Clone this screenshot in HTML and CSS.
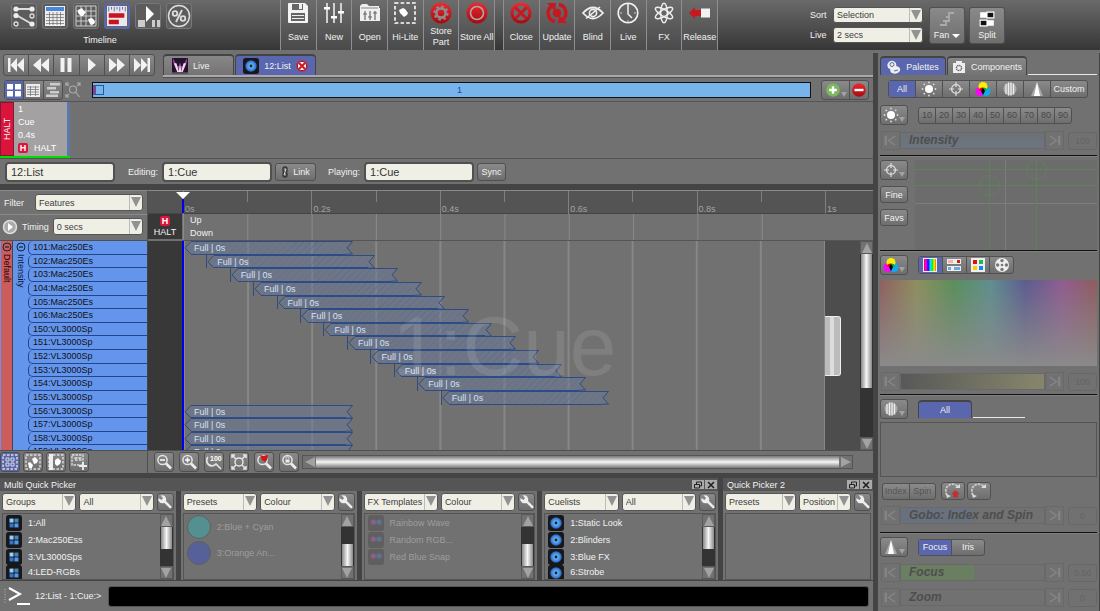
FILE: index.html
```html
<!DOCTYPE html>
<html lang="en">
    <head>
        <title>12:List - Timeline</title>
        <meta charset="UTF-8">
        <link rel="stylesheet" href="styles.css">
        <script src="timeline.js" defer></script>
    </head>
    <body>
        <!-- icons -->
        <svg class="defs" aria-hidden="true">
            <defs>
                <linearGradient id="redg" x1="0" y1="0" x2="0" y2="1"><stop offset="0" stop-color="#ee2a30"/><stop offset="1" stop-color="#a50a10"/></linearGradient>
                <linearGradient id="rainbow"><stop offset="0" stop-color="#f00"/><stop offset=".15" stop-color="#f0f"/><stop offset=".35" stop-color="#20f"/><stop offset=".55" stop-color="#0ef"/><stop offset=".7" stop-color="#0e2"/><stop offset=".85" stop-color="#fe0"/><stop offset="1" stop-color="#f60"/></linearGradient>
                <radialGradient id="disc"><stop offset="0" stop-color="#8cf"/><stop offset=".6" stop-color="#4a94e6"/><stop offset="1" stop-color="#2660b8"/></radialGradient>
            </defs>
            <symbol id="patch" viewBox="0 0 24 24"><g stroke="#ddd" stroke-width="2" fill="none"><path d="M4 5h16M4 11l16 9"/><circle cx="20" cy="12" r="2" stroke-width="1.3"/><circle cx="4" cy="20" r="2" stroke-width="1.3"/></g><g fill="#eee"><circle cx="4" cy="5" r="2.6"/><circle cx="20" cy="5" r="2.6"/><circle cx="4" cy="11.500" r="2.600"/><circle cx="20" cy="20" r="2.6"/></g></symbol>
            <symbol id="sheet" viewBox="0 0 24 24"><path d="M2 2h20v20H2z" fill="#eee"/><path d="M3 3h18v4H3z" fill="#4a86dc"/><path d="M3 10.500h18M3 13.500h18M3 16.500h18M3 19.500h18M6.500 8v13M10 8v13M14 8v13M17.500 8v13" stroke="#777" stroke-width=".8"/></symbol>
            <symbol id="plan" viewBox="0 0 24 24"><path d="M2 2h20v20H2zM7 2v20M12 2v20M17 2v20M2 7h20M2 12h20M2 17h20" stroke="#ccc" fill="none"/><path d="M4 6l4-2 2 3 2 1-3 4-2 0-3-3zM14 15l4-1 2 2 1 3-3 2-2-1z" fill="#fff"/></symbol>
            <symbol id="tline" viewBox="0 0 24 24"><path d="M1 1h22v22H1z" fill="#e8e8ee"/><path d="M3 2v5M6 2v3M9 2v5M12 2v3M15 2v5M18 2v3M21 2v5" stroke="#5a66a8"/><path d="M3 9h17v5H3zM3 16h11v5H3z" fill="#c8141c"/></symbol>
            <symbol id="playpause" viewBox="0 0 24 24"><path d="M10 2l8 8-8 8z" fill="#fff"/><path d="M2 16h7v7H2zM16 16h3v7h-3zM21 16h3v7h-3z" fill="#ccc"/></symbol>
            <symbol id="percent" viewBox="0 0 24 24"><g fill="none" stroke="#ddd"><circle cx="12" cy="12" r="10.500" stroke-width="1.500"/><circle cx="8" cy="9.500" r="2.300" stroke-width="1.800"/><circle cx="16" cy="14.500" r="2.300" stroke-width="1.800"/><path d="M15 6L9 18" stroke-width="1.800"/></g></symbol>
            <symbol id="save" viewBox="0 0 22 22"><path d="M1 2q0-1 1-1h16l3 3v16q0 1-1 1H2q-1 0-1-1z" fill="#f4f4f4"/><path d="M5 2h11v6H5zM4 11h14v8H4z" fill="#666"/><path d="M12 2h3v5h-3zM5 13h12v1H5zM5 16h12v1H5z" fill="#eee"/></symbol>
            <symbol id="faders" viewBox="0 0 22 22"><path d="M4 1v20M11 1v20M18 1v20" stroke="#ddd" stroke-width="1.800"/><path d="M1 5h6v2.500H1zM8 14h6v2.500H8zM15 9h6v2.500h-6z" fill="#fff"/></symbol>
            <symbol id="open" viewBox="0 0 22 22"><path d="M1 19V4l2-2h5l2 2h10v2h1v13z" fill="#eee"/><path d="M2 6h17" stroke="#888"/><path d="M6 9v9M11 9v9M16 9v9M4 12h4M9 15h4M14 11h4" stroke="#666" stroke-width="1.200"/></symbol>
            <symbol id="hilite" viewBox="0 0 22 22"><path d="M1 1h20v20H1z" fill="none" stroke="#fff" stroke-width="1.600" stroke-dasharray="3.500 2.160"/><path d="M5 8l4-2 2 1 3 4-1 2-3 2-4-4z" fill="#fff"/></symbol>
            <symbol id="part" viewBox="0 0 22 22"><circle cx="11" cy="11" r="10.500" fill="url(#redg)"/><circle cx="11" cy="11" r="4.600" fill="none" stroke="#8d8d8d" stroke-width="2.600"/><circle cx="11" cy="11" r="6.600" fill="none" stroke="#8d8d8d" stroke-width="2" stroke-dasharray="2.600 2.580"/></symbol>
            <symbol id="storeall" viewBox="0 0 22 22"><circle cx="11" cy="11" r="10.500" fill="url(#redg)"/><circle cx="11" cy="11" r="6.500" fill="none" stroke="#aaa" stroke-width="1.600"/></symbol>
            <symbol id="close" viewBox="0 0 22 22"><circle cx="11" cy="11" r="10.500" fill="url(#redg)"/><circle cx="11" cy="11" r="7.500" fill="#6a6a6a"/><path d="M5.500 5.500l11 11M16.500 5.500l-11 11" stroke="#c8181f" stroke-width="3"/></symbol>
            <symbol id="update" viewBox="0 0 22 22"><circle cx="11" cy="11" r="4.300" fill="#c8181f"/><path d="M7 3.500a8.500 8.500 0 0 0 2 16M15 18.500a8.500 8.500 0 0 0-2-16" fill="none" stroke="#c8181f" stroke-width="3.400"/><path d="M1 1h9l-1 8zM21 21h-9l1-8z" fill="#c8181f"/></symbol>
            <symbol id="blind" viewBox="0 0 22 22"><path d="M1 11q10-11 20 0q-10 11-20 0z" fill="none" stroke="#eee" stroke-width="1.800"/><circle cx="11" cy="11" r="3.600" fill="none" stroke="#eee" stroke-width="1.600"/><path d="M4 16.500L18 5" stroke="#eee" stroke-width="1.600"/></symbol>
            <symbol id="clock" viewBox="0 0 22 22"><circle cx="11" cy="11" r="9.800" fill="none" stroke="#f2f2f2" stroke-width="1.600"/><path d="M11 2v10l4 4" fill="none" stroke="#f2f2f2" stroke-width="1.500"/><path d="M3 11h2M17 11h2M11 18v2" stroke="#ccc"/></symbol>
            <symbol id="fx" viewBox="0 0 22 22"><g fill="none" stroke="#eee" stroke-width="1.400"><ellipse cx="11" cy="11" rx="3.300" ry="9.800"/><ellipse cx="11" cy="11" rx="3.300" ry="9.800" transform="rotate(60 11 11)"/><ellipse cx="11" cy="11" rx="3.300" ry="9.800" transform="rotate(120 11 11)"/></g></symbol>
            <symbol id="release" viewBox="0 0 22 22"><path d="M0 11l6-6v3h6v6H6v3z" fill="#c8181f"/><path d="M12 6.500h9v9h-9z" fill="#f2f2f2"/></symbol>
            <symbol id="fan" viewBox="0 0 16 16"><path d="M1 14h6v-4M4 10h6V6M7 6h3V2h5" fill="none" stroke="#aaa" stroke-width="1.800"/></symbol>
            <symbol id="split" viewBox="0 0 14 14"><path d="M1 1h6v5H1zM7 8h6v5H7z" fill="#fff"/><path d="M7 1h6v5H7zM1 8h6v5H1z" fill="#111"/><path d="M7 1h6v5H7zM1 8h6v5H1z" fill="none" stroke="#fff"/></symbol>
            <symbol id="first" viewBox="0 0 16 14"><path d="M0 0h2.500v14H0zM9 0v14L2.500 7zM16 0v14L9 7z" fill="#f2f2f2"/></symbol>
            <symbol id="rew" viewBox="0 0 16 14"><path d="M8 0v14L0 7zM16 0v14L8 7z" fill="#f2f2f2"/></symbol>
            <symbol id="pause" viewBox="0 0 16 14"><path d="M2.500 0h4v14h-4zM9.500 0h4v14h-4z" fill="#f2f2f2"/></symbol>
            <symbol id="play" viewBox="0 0 16 14"><path d="M4 0l8 7-8 7z" fill="#f2f2f2"/></symbol>
            <symbol id="ff" viewBox="0 0 16 14"><path d="M0 0l8 7-8 7zM8 0l8 7-8 7z" fill="#f2f2f2"/></symbol>
            <symbol id="last" viewBox="0 0 16 14"><path d="M16 0h-2.500v14H16zM7 0v14l6.500-7zM0 0v14l7-7z" fill="#f2f2f2"/></symbol>
            <symbol id="stage" viewBox="0 0 18 18"><path d="M0 0h18v18H0z" fill="#24122f"/><path d="M1 0l5 9h6l5-9v4l-4 9H5L1 4z" fill="#92418a"/><path d="M2 6l4 10h2L5 6zM9 5l-1.500 11h3zM16 6l-4 10h-2l3-10z" fill="#f4d4f0"/><path d="M0 16h18v2H0z" fill="#555"/></symbol>
            <symbol id="cuelist" viewBox="0 0 18 18"><rect width="18" height="18" rx="3" fill="#16181c"/><circle cx="9" cy="9" r="6.500" fill="url(#disc)"/><circle cx="9" cy="9" r="1.600" fill="#123"/></symbol>
            <symbol id="group" viewBox="0 0 18 18"><rect width="18" height="18" rx="3" fill="#16181c"/><path d="M4 4h4.500v4.500H4z" fill="#9cf"/><path d="M9.500 4H14v4.500H9.500z" fill="#48b"/><path d="M4 9.500h4.500V14H4z" fill="#37c"/><path d="M9.500 9.500H14V14H9.500z" fill="#59e"/></symbol>
            <symbol id="effect" viewBox="0 0 18 18"><rect width="18" height="18" rx="3" fill="#5f5f5f"/><circle cx="6" cy="8" r="3" fill="#8d5f88"/><circle cx="12.500" cy="8" r="3" fill="#5e7394"/></symbol>
            <symbol id="tabx" viewBox="0 0 12 12"><circle cx="6" cy="6" r="4.800" fill="#fff" stroke="#c8181f" stroke-width="1.600"/><path d="M3 3l6 6M9 3l-6 6" stroke="#c8181f" stroke-width="2"/></symbol>
            <symbol id="tiles" viewBox="0 0 16 16"><path d="M1 2h6v5.500H1zM9 2h6v5.500H9zM1 9h6v5.500H1zM9 9h6v5.500H9z" fill="#fff"/></symbol>
            <symbol id="list" viewBox="0 0 16 16"><path d="M1 2h14v13H1z" fill="#eee"/><path d="M2 5h12M2 7.500h12M2 10h12M2 12.500h12M5.500 4v10M10.500 4v10" stroke="#777" stroke-width=".8"/></symbol>
            <symbol id="stack" viewBox="0 0 16 16"><path d="M5 1h10v2.500H5zM2 5h9v2.500H2zM5 9h9v2.500H5zM1 12.500h12V15H1z" fill="#ccc"/></symbol>
            <symbol id="find" viewBox="0 0 16 16"><g fill="none" stroke="#aaa" stroke-width="1.200"><path d="M1 4V1h3M12 1h3v3M1 12v3h3M1 1l3 3M15 1l-3 3M1 15l3-3"/><circle cx="8" cy="7.500" r="3.500"/><path d="M10.500 10l4 5"/></g></symbol>
            <symbol id="plus" viewBox="0 0 14 14"><circle cx="7" cy="7" r="6.800" fill="#7cb75e"/><path d="M7 3.200v7.600M3.200 7h7.600" stroke="#fff" stroke-width="2.400"/></symbol>
            <symbol id="minus" viewBox="0 0 14 14"><circle cx="7" cy="7" r="6.800" fill="url(#redg)"/><path d="M2.500 7h9" stroke="#fff" stroke-width="2.400"/></symbol>
            <symbol id="chain" viewBox="0 0 8 12"><g fill="none" stroke="#333" stroke-width="1.400"><rect x="2" y="1" width="4" height="5" rx="2"/><rect x="2" y="6" width="4" height="5" rx="2"/></g><path d="M5 3l-2 6" stroke="#ddd"/></symbol>
            <symbol id="sun" viewBox="0 0 16 16"><circle cx="8" cy="8" r="4" fill="#fff"/><g fill="#ddd"><circle cx="8" cy="1.500" r=".9"/><circle cx="8" cy="14.500" r=".9"/><circle cx="1.500" cy="8" r=".9"/><circle cx="14.500" cy="8" r=".9"/><circle cx="3.300" cy="3.300" r=".9"/><circle cx="12.700" cy="3.300" r=".9"/><circle cx="3.300" cy="12.700" r=".9"/><circle cx="12.700" cy="12.700" r=".9"/></g></symbol>
            <symbol id="target" viewBox="0 0 16 16"><circle cx="8" cy="8" r="4.400" fill="none" stroke="#ddd" stroke-width="1.400"/><path d="M8 1v5M8 10v5M1 8h5M10 8h5" stroke="#ddd" stroke-width="1.200"/></symbol>
            <symbol id="cmy" viewBox="0 0 16 16"><circle cx="5" cy="10.500" r="4.500" fill="#f0f"/><circle cx="11" cy="10.500" r="4.500" fill="#1ae"/><circle cx="8" cy="5.500" r="4.500" fill="#fe0"/><path d="M4 8q2-2 4-1.500V9L6 10q-2-.5-2-2z" fill="#e00"/><path d="M12 8q-2-2-4-1.500V9l2 1q2-.5 2-2z" fill="#0a4"/><path d="M8 7l2 3-2 4-2-4z" fill="#000"/></symbol>
            <symbol id="gobo" viewBox="0 0 16 16"><circle cx="8" cy="8" r="6.500" fill="#aaa"/><path d="M4 3v10M6.500 1.500v13M9 1.500v13M11.500 2.500v11" stroke="#eee" stroke-width="1.200"/></symbol>
            <symbol id="beam" viewBox="0 0 16 16"><path d="M8 1l6 14H2z" fill="#aaa"/><path d="M8 1l3 14H5z" fill="#fff"/></symbol>
            <symbol id="palette" viewBox="0 0 14 14"><path d="M1 3q3-4 7-1 2 2 1 4 5 1 4 5-3 4-8 2-2-1-2-4-4-2-2-6z" fill="#eee"/><circle cx="5" cy="4.500" r="2" fill="none" stroke="#5a66a8"/><path d="M7 11l4-1" stroke="#5a66a8"/></symbol>
            <symbol id="component" viewBox="0 0 14 14"><path d="M4 3V1h6v2h3v10H1V3z" fill="#eee"/><circle cx="7" cy="8" r="2.600" fill="none" stroke="#666" stroke-width="1.400" stroke-dasharray="1.400 .6"/></symbol>
            <symbol id="spectrum" viewBox="0 0 16 16"><path d="M1 1h14v14H1z" fill="#eee"/><path d="M2 2h12v12H2z" fill="url(#rainbow)"/></symbol>
            <symbol id="mix" viewBox="0 0 16 16"><path d="M1 2h14v5H1zM1 9h14v5H1z" fill="#eee"/><path d="M2 3h5v3H2z" fill="#f6b0b0"/><path d="M11 3h3v3h-3z" fill="#c22"/><path d="M2 10h3v3H2zM8 10h6v3H8z" fill="#6ad"/></symbol>
            <symbol id="swatches" viewBox="0 0 16 16"><path d="M1 1h14v14H1z" fill="#eee"/><path d="M3 3h4v4H3z" fill="#e01010"/><path d="M9 3h4v4H9z" fill="#10c050"/><path d="M3 9h4v4H3z" fill="#fc0"/><path d="M9 9h4v4H9z" fill="#18e"/></symbol>
            <symbol id="wheel" viewBox="0 0 16 16"><circle cx="8" cy="8" r="7" fill="#eee"/><g fill="#777"><circle cx="8" cy="3.600" r="1.700"/><circle cx="8" cy="12.400" r="1.700"/><circle cx="3.600" cy="8" r="1.700"/><circle cx="12.400" cy="8" r="1.700"/><circle cx="8" cy="8" r="1.300"/></g></symbol>
            <symbol id="spinred" viewBox="0 0 16 16"><path d="M2 12a6 6 0 0 1 11-8" fill="none" stroke="#ccc" stroke-width="1.800" stroke-dasharray="2.500 1"/><path d="M10 5h5V1zM1 11l1 4 4-2z" fill="#ddd"/><path d="M10.500 7l4.500 4h-2v3.500H8V11H6z" fill="#c03238"/></symbol>
            <symbol id="spin" viewBox="0 0 16 16"><path d="M2 12a6 6 0 0 1 11-8" fill="none" stroke="#ccc" stroke-width="1.800" stroke-dasharray="2.500 1"/><path d="M10 5h5V1zM1 11l1 4 4-2z" fill="#ddd"/></symbol>
            <symbol id="dashed" viewBox="0 0 16 16"><path d="M1 1h14v14H1z" fill="none" stroke="#ddd" stroke-width="1.400" stroke-dasharray="2.500 1.500"/></symbol>
            <symbol id="selall" viewBox="0 0 16 16"><use href="#dashed"/><path d="M4 4h3v3H4zM9 4h3v3H9zM4 9h3v3H4zM9 9h3v3H9z" fill="none" stroke="#ddd"/></symbol>
            <symbol id="sellamp" viewBox="0 0 16 16"><use href="#dashed"/><path d="M7 5l3-2 3 3-1 3-3 1zM3 9l2-1 3 3-1 3H4z" fill="#fff"/></symbol>
            <symbol id="selbar" viewBox="0 0 16 16"><use href="#dashed"/><path d="M1 0h4v16H1z" fill="#eee"/><path d="M7 6l3-2 3 3-1 3-3 2-2-2z" fill="#fff"/></symbol>
            <symbol id="seladd" viewBox="0 0 16 16"><path d="M1 1h11v10H1zM4 4h2v2H4zM8 4h2v2H8z" fill="none" stroke="#ddd" stroke-width="1.300" stroke-dasharray="2.500 1"/><path d="M12 8v8M8 12h8" stroke="#eee" stroke-width="1.800"/></symbol>
            <symbol id="lens" viewBox="0 0 16 16"><circle cx="6.500" cy="6" r="4.600" fill="none" stroke="#e4e4e4" stroke-width="1.500"/><path d="M10 9.500l5 5" stroke="#eee" stroke-width="2.600"/></symbol>
            <symbol id="zout" viewBox="0 0 16 16"><use href="#lens"/><path d="M4 6h5" stroke="#fff" stroke-width="1.500"/></symbol>
            <symbol id="zin" viewBox="0 0 16 16"><use href="#lens"/><path d="M4 6h5M6.500 3.500v5" stroke="#fff" stroke-width="1.500"/></symbol>
            <symbol id="zfit" viewBox="0 0 16 16"><g fill="none" stroke="#e4e4e4" stroke-width="1.500"><circle cx="8" cy="8" r="4"/><path d="M1 4V1h3M12 1h3v3M1 12v3h3M12 15h3v-3M1 1l4 4M15 1l-4 4M1 15l4-4M15 15l-4-4"/></g></symbol>
            <symbol id="zlamp" viewBox="0 0 16 16"><use href="#lens"/><path d="M4 1l4 1 4-1-1 5-2 2-3-2z" fill="#d3161d"/></symbol>
            <symbol id="zlock" viewBox="0 0 16 16"><use href="#lens"/><path d="M4.500 5.500h4v3h-4z" fill="#eee"/><path d="M5 5V3.500q1.500-1.500 3 0V5" fill="none" stroke="#eee" stroke-width=".8"/></symbol>
            <symbol id="wrench" viewBox="0 0 16 16"><path d="M3.500 1.200L7 1.500q3 2.500 2 5.500l5.500 5.500q.5 1.500-1.500 2L7.500 9Q3 10 1.300 6.500L1.500 4l3 2L6 4z" fill="#eee"/></symbol>
            <symbol id="restore" viewBox="0 0 10 10"><path d="M3.500 2h5v4h-5z" fill="none" stroke="#222"/><path d="M1.500 4.500h5V8h-5z" fill="#aaa" stroke="#222"/></symbol>
            <symbol id="x" viewBox="0 0 10 10"><path d="M2 2l6 6M8 2L2 8" stroke="#222" stroke-width="1.600"/></symbol>
            <symbol id="prompt" viewBox="0 0 28 22"><path d="M1 4v15" stroke="#bbb" stroke-dasharray="1 1.500"/><path d="M5 3l11 6-11 6" fill="none" stroke="#fff" stroke-width="2"/><path d="M13 19h13" stroke="#fff" stroke-width="2"/></symbol>
            <symbol id="start" viewBox="0 0 18 18"><path d="M4 4v10" stroke="currentColor" stroke-width="2.500"/><path d="M14 4L7 9l7 5" fill="none" stroke="currentColor" stroke-width="1.600"/></symbol>
            <symbol id="end" viewBox="0 0 18 18"><path d="M14 4v10" stroke="currentColor" stroke-width="2.500"/><path d="M4 4l7 5-7 5" fill="none" stroke="currentColor" stroke-width="1.600"/></symbol>
            <symbol id="go" viewBox="0 0 16 16"><circle cx="8" cy="8" r="6.500" fill="#aaa" stroke="#ddd" stroke-width="1.500"/><path d="M6 4l5 4-5 4z" fill="#fff"/></symbol>
            <symbol id="fold" viewBox="0 0 10 10"><circle cx="5" cy="5" r="4" fill="none" stroke="#123" stroke-width="1"/><path d="M3 5h4" stroke="#123" stroke-width="1.200"/></symbol>
        </svg>

        <header class="topbar">
            <div class="modes">
                <div class="mode-icons">
                    <button class="mode" aria-label="Patch"><svg><use href="#patch"/></svg></button>
                    <button class="mode" aria-label="Channels"><svg><use href="#sheet"/></svg></button>
                    <button class="mode" aria-label="Plan"><svg><use href="#plan"/></svg></button>
                    <button class="mode active" aria-label="Timeline"><svg><use href="#tline"/></svg></button>
                    <button class="mode" aria-label="Playback"><svg><use href="#playpause"/></svg></button>
                    <button class="mode" aria-label="Master"><svg><use href="#percent"/></svg></button>
                </div>
                <div class="mode-name">Timeline</div>
            </div>
            <div class="tools">
                <button><svg><use href="#save"/></svg><span>Save</span></button>
                <button><svg><use href="#faders"/></svg><span>New</span></button>
                <button><svg><use href="#open"/></svg><span>Open</span></button>
                <button><svg><use href="#hilite"/></svg><span>Hi-Lite</span></button>
                <button><svg><use href="#part"/></svg><span>Store<br>Part</span></button>
                <button><svg><use href="#storeall"/></svg><span>Store All</span></button>
            </div>
            <div class="tools">
                <button><svg><use href="#close"/></svg><span>Close</span></button>
                <button><svg><use href="#update"/></svg><span>Update</span></button>
                <button><svg><use href="#blind"/></svg><span>Blind</span></button>
                <button><svg><use href="#clock"/></svg><span>Live</span></button>
                <button><svg><use href="#fx"/></svg><span>FX</span></button>
                <button><svg><use href="#release"/></svg><span>Release</span></button>
            </div>
            <div class="sorting">
                <label for="sort">Sort</label>
                <div class="select"><select id="sort"><option>Selection</option></select></div>
                <label for="live">Live</label>
                <div class="select"><select id="live"><option>2 secs</option></select></div>
            </div>
            <button class="btn big"><svg><use href="#fan"/></svg><span class="drop">Fan</span></button>
            <button class="btn big"><svg><use href="#split"/></svg><span>Split</span></button>
        </header>

        <div class="work">
            <main class="main">
                <div class="tabrow">
                    <div class="seg transport">
                        <button aria-label="First"><svg><use href="#first"/></svg></button>
                        <button aria-label="Rewind"><svg><use href="#rew"/></svg></button>
                        <button aria-label="Pause"><svg><use href="#pause"/></svg></button>
                        <button aria-label="Play"><svg><use href="#play"/></svg></button>
                        <button aria-label="Forward"><svg><use href="#ff"/></svg></button>
                        <button aria-label="Last"><svg><use href="#last"/></svg></button>
                    </div>
                    <div class="tabs">
                        <button class="tab live"><svg><use href="#stage"/></svg>Live</button>
                        <button class="tab list active"><svg><use href="#cuelist"/></svg>12:List<svg class="tabx"><use href="#tabx"/></svg></button>
                    </div>
                </div>

                <div class="viewbar">
                    <div class="seg views">
                        <button class="active" aria-label="Tiles"><svg><use href="#tiles"/></svg></button>
                        <button aria-label="List"><svg><use href="#list"/></svg></button>
                        <button aria-label="Stack"><svg><use href="#stack"/></svg></button>
                    </div>
                    <svg class="find"><use href="#find"/></svg>
                    <div class="overview"><i></i><span>1</span></div>
                    <div class="seg addremove">
                        <button class="arrow" aria-label="Add cue"><svg><use href="#plus"/></svg></button>
                        <button class="remove" aria-label="Remove cue"><svg><use href="#minus"/></svg></button>
                    </div>
                </div>

                <div class="cues">
                    <div class="cue">
                        <div class="cue-halt">HALT</div>
                        <div class="cue-info">
                            <div>1</div>
                            <div>Cue</div>
                            <div>0.4s</div>
                            <div><b class="h">H</b>HALT</div>
                        </div>
                    </div>
                </div>

                <div class="editbar">
                    <input type="text" value="12:List" aria-label="Cuelist">
                    <label for="editing">Editing:</label>
                    <input id="editing" type="text" value="1:Cue">
                    <button class="btn link"><svg><use href="#chain"/></svg>Link</button>
                    <label for="playing">Playing:</label>
                    <input id="playing" type="text" value="1:Cue">
                    <button class="btn sync">Sync</button>
                </div>

                <div class="timeline">
                    <div class="cell filter">
                        <label for="filter">Filter</label>
                        <div class="select"><select id="filter"><option>Features</option></select></div>
                    </div>
                    <div class="ruler-pad"></div>
                    <div class="ruler">
                        <span>0s</span><span></span><span>0.2s</span><span></span><span>0.4s</span><span></span><span>0.6s</span><span></span><span>0.8s</span><span></span>
                    </div>
                    <div class="ruler-end">1s</div>

                    <div class="cell timing">
                        <svg><use href="#go"/></svg>
                        <label for="timing">Timing</label>
                        <div class="select"><select id="timing"><option>0 secs</option></select></div>
                    </div>
                    <div class="halt"><b class="h">H</b>HALT</div>
                    <div class="updown">Up<br>Down</div>
                    <div class="updown-end"></div>

                    <div class="names">
                        <div class="part"><svg><use href="#fold"/></svg><span>Default</span></div>
                        <div class="feature"><svg><use href="#fold"/></svg><span>Intensity</span></div>
                        <div class="rows" id="names"></div>
                    </div>
                    <div class="dark"></div>
                    <div class="lanes">
                        <div class="rows" id="lanes"></div>
                        <div class="watermark">1:Cue</div>
                    </div>
                    <div class="after"><div class="grip"></div></div>
                    <div class="vscroll tall"><i class="up"></i><div class="thumb"></div><i class="down"></i></div>
                </div>

                <div class="footbar">
                    <div class="selects">
                        <button class="btn icon active" aria-label="Select all"><svg><use href="#selall"/></svg></button>
                        <button class="btn icon" aria-label="Select lamps"><svg><use href="#sellamp"/></svg></button>
                        <button class="btn icon" aria-label="Select part"><svg><use href="#selbar"/></svg></button>
                        <button class="btn icon" aria-label="Add to selection"><svg><use href="#seladd"/></svg></button>
                    </div>
                    <div class="zooms">
                        <button class="btn icon" aria-label="Zoom out"><svg><use href="#zout"/></svg></button>
                        <button class="btn icon" aria-label="Zoom in"><svg><use href="#zin"/></svg></button>
                        <button class="btn icon" aria-label="Zoom 100"><svg viewBox="0 0 16 16"><path d="M2 3a5 5 0 0 0 8 7l5 5" fill="none" stroke="#e4e4e4" stroke-width="1.700"/><text x="4" y="7" font-size="7" font-weight="bold" fill="#fff">100</text></svg></button>
                        <button class="btn icon" aria-label="Zoom to fit"><svg><use href="#zfit"/></svg></button>
                        <button class="btn icon" aria-label="Zoom to lamps"><svg><use href="#zlamp"/></svg></button>
                        <button class="btn icon" aria-label="Lock zoom"><svg><use href="#zlock"/></svg></button>
                    </div>
                    <div class="hscroll"><i class="left"></i><div class="thumb"></div><i class="right"></i></div>
                </div>

                <div class="pickers">
                    <section class="multi">
                        <h2>Multi Quick Picker <span><button aria-label="Restore"><svg><use href="#restore"/></svg></button><button aria-label="Close picker"><svg><use href="#x"/></svg></button></span></h2>
                        <div class="panels">
                            <div class="panel">
                                <div class="choose">
                                    <div class="select"><select aria-label="Type"><option>Groups</option></select></div>
                                    <div class="select"><select aria-label="Kind"><option>All</option></select></div>
                                    <button class="btn wrench" aria-label="Options"><svg><use href="#wrench"/></svg></button>
                                </div>
                                <div class="box">
                                    <ul>
                                        <li><svg><use href="#group"/></svg>1:All</li>
                                        <li><svg><use href="#group"/></svg>2:Mac250Ess</li>
                                        <li><svg><use href="#group"/></svg>3:VL3000Sps</li>
                                        <li><svg><use href="#group"/></svg>4:LED-RGBs</li>
                                    </ul>
                                    <div class="vscroll"><i class="up"></i><div class="thumb"></div><i class="down"></i></div>
                                </div>
                            </div>
                            <div class="panel">
                                <div class="choose">
                                    <div class="select"><select aria-label="Type"><option>Presets</option></select></div>
                                    <div class="select"><select aria-label="Kind"><option>Colour</option></select></div>
                                    <button class="btn wrench" aria-label="Options"><svg><use href="#wrench"/></svg></button>
                                </div>
                                <div class="box">
                                    <ul class="colours">
                                        <li><i class="cyan"></i>2:Blue + Cyan</li>
                                        <li><i class="indigo"></i>3:Orange An...</li>
                                    </ul>
                                    <div class="vscroll low"><i class="up"></i><div class="thumb"></div><i class="down"></i></div>
                                </div>
                            </div>
                            <div class="panel">
                                <div class="choose">
                                    <div class="select"><select aria-label="Type"><option>FX Templates</option></select></div>
                                    <div class="select"><select aria-label="Kind"><option>Colour</option></select></div>
                                    <button class="btn wrench" aria-label="Options"><svg><use href="#wrench"/></svg></button>
                                </div>
                                <div class="box">
                                    <ul class="off">
                                        <li><svg><use href="#effect"/></svg>Rainbow Wave</li>
                                        <li><svg><use href="#effect"/></svg>Random RGB...</li>
                                        <li><svg><use href="#effect"/></svg>Red Blue Snap</li>
                                    </ul>
                                    <div class="vscroll low"><i class="up"></i><div class="thumb"></div><i class="down"></i></div>
                                </div>
                            </div>
                            <div class="panel">
                                <div class="choose">
                                    <div class="select"><select aria-label="Type"><option>Cuelists</option></select></div>
                                    <div class="select"><select aria-label="Kind"><option>All</option></select></div>
                                    <button class="btn wrench" aria-label="Options"><svg><use href="#wrench"/></svg></button>
                                </div>
                                <div class="box">
                                    <ul>
                                        <li><svg><use href="#cuelist"/></svg>1:Static Look</li>
                                        <li><svg><use href="#cuelist"/></svg>2:Blinders</li>
                                        <li><svg><use href="#cuelist"/></svg>3:Blue FX</li>
                                        <li><svg><use href="#cuelist"/></svg>6:Strobe</li>
                                    </ul>
                                    <div class="vscroll"><i class="up"></i><div class="thumb"></div><i class="down"></i></div>
                                </div>
                            </div>
                        </div>
                    </section>
                    <section class="single">
                        <h2>Quick Picker 2 <span><button aria-label="Restore"><svg><use href="#restore"/></svg></button><button aria-label="Close picker"><svg><use href="#x"/></svg></button></span></h2>
                        <div class="panels">
                            <div class="panel">
                                <div class="choose">
                                    <div class="select"><select aria-label="Type"><option>Presets</option></select></div>
                                    <div class="select short"><select aria-label="Kind"><option>Position</option></select></div>
                                    <button class="btn wrench" aria-label="Options"><svg><use href="#wrench"/></svg></button>
                                </div>
                                <div class="box"></div>
                            </div>
                        </div>
                    </section>
                </div>

                <div class="command">
                    <svg><use href="#prompt"/></svg>
                    <label for="cmd">12:List - 1:Cue:&gt;</label>
                    <input id="cmd" type="text">
                </div>
            </main>

            <aside class="side">
                <div class="tabs side-tabs">
                    <button class="tab active"><svg><use href="#palette"/></svg>Palettes</button>
                    <button class="tab"><svg><use href="#component"/></svg>Components</button>
                </div>

                <section class="intensity">
                    <div class="seg kinds">
                        <button class="active">All</button>
                        <button aria-label="Intensity"><svg><use href="#sun"/></svg></button>
                        <button aria-label="Position"><svg><use href="#target"/></svg></button>
                        <button aria-label="Colour"><svg><use href="#cmy"/></svg></button>
                        <button aria-label="Gobo"><svg><use href="#gobo"/></svg></button>
                        <button aria-label="Beam"><svg><use href="#beam"/></svg></button>
                        <button class="custom">Custom</button>
                    </div>
                    <div class="line">
                        <button class="btn kind arrow" aria-label="Intensity"><svg><use href="#sun"/></svg></button>
                        <div class="seg levels">
                            <button>10</button><button>20</button><button>30</button><button>40</button><button>50</button><button>60</button><button>70</button><button>80</button><button>90</button>
                        </div>
                    </div>
                    <div class="slider blue">
                        <svg><use href="#start"/></svg><div class="track">Intensity</div><svg><use href="#end"/></svg><span>100</span>
                    </div>
                </section>

                <section class="position">
                    <div class="pos-btns">
                        <button class="btn kind arrow" aria-label="Position"><svg><use href="#target"/></svg></button>
                        <button class="btn">Fine</button>
                        <button class="btn">Favs</button>
                    </div>
                    <svg class="pan" viewBox="0 0 183 90" preserveAspectRatio="xMinYMin slice">
                        <path d="M0 0h183v90H0z" fill="#6c6c6c"/>
                        <path d="M90.500 0v90M0 43.500h183" stroke="#7d7d7d"/>
                        <g stroke="#60825a" fill="none"><path d="M74.500 0v90M121.500 0v90M0 9.500h183M0 25.500h183"/><circle cx="74.500" cy="25.500" r="10"/><circle cx="121.500" cy="9.500" r="10"/></g>
                    </svg>
                </section>

                <section class="colour">
                    <div class="line">
                        <button class="btn kind arrow" aria-label="Colour"><svg><use href="#cmy"/></svg></button>
                        <div class="seg mixers">
                            <button class="active" aria-label="Spectrum"><svg><use href="#spectrum"/></svg></button>
                            <button aria-label="Faders"><svg><use href="#mix"/></svg></button>
                            <button aria-label="Swatches"><svg><use href="#swatches"/></svg></button>
                            <button aria-label="Wheel"><svg><use href="#wheel"/></svg></button>
                        </div>
                    </div>
                    <div class="field"></div>
                    <div class="slider sat">
                        <svg><use href="#start"/></svg><div class="track"></div><svg><use href="#end"/></svg><span>100</span>
                    </div>
                </section>

                <section class="gobo">
                    <div class="line">
                        <button class="btn kind arrow" aria-label="Gobo"><svg><use href="#gobo"/></svg></button>
                        <div class="tabs gobo-tabs"><button class="tab active">All</button></div>
                    </div>
                    <div class="gobo-box"></div>
                    <div class="line spin">
                        <div class="seg off"><button>Index</button><button>Spin</button></div>
                        <button class="btn" aria-label="Spin home"><svg><use href="#spinred"/></svg></button>
                        <button class="btn" aria-label="Spin"><svg><use href="#spin"/></svg></button>
                    </div>
                    <div class="slider half">
                        <svg><use href="#start"/></svg><div class="track">Gobo: Index and Spin</div><svg><use href="#end"/></svg><span>0</span>
                    </div>
                </section>

                <section class="beam">
                    <div class="line">
                        <button class="btn kind arrow" aria-label="Beam"><svg><use href="#beam"/></svg></button>
                        <div class="seg focus"><button class="active">Focus</button><button>Iris</button></div>
                    </div>
                    <div class="slider green">
                        <svg><use href="#start"/></svg><div class="track">Focus</div><svg><use href="#end"/></svg><span>0.50</span>
                    </div>
                    <div class="slider">
                        <svg><use href="#start"/></svg><div class="track">Zoom</div><svg><use href="#end"/></svg><span>0</span>
                    </div>
                </section>
            </aside>
        </div>
    </body>
</html>
```
FILE: styles.css
```css
*{
    box-sizing: border-box;
}
body{
    margin: 0;
    height: 100vh;
    display: flex;
    flex-direction: column;
    overflow: hidden;
    background: #717171;
    color: #f2f2f2;
    font: 9px/12px "Liberation Sans", Arial, sans-serif;
}
button, input, select{
    margin: 0;
    padding: 0;
    font: inherit;
    color: inherit;
}
button{
    display: flex;
    align-items: center;
    justify-content: center;
    border: 0;
    background: none;
    line-height: 12px;
}
svg{
    display: block;
    width: 16px;
    height: 16px;
    flex: none;
}
.defs{
    position: absolute;
    width: 0;
    height: 0;
}

/* shared controls */
.btn, .seg{
    border: 1px solid #505050;
    border-radius: 3px;
    background: linear-gradient(#8a8a8a, #6e6e6e);
}
.seg{
    display: flex;
}
.seg button{
    flex: 1;
    border-left: 1px solid #505050;
}
.seg button:first-child{
    border-left: 0;
}
.seg .active, .btn.active, .tab.active{
    background: #5a66ad;
}
.arrow{
    position: relative;
    padding-right: 6px;
}
.arrow::after{
    content: "";
    position: absolute;
    right: 2px;
    bottom: 2px;
    border: 3px solid transparent;
    border-top: 5px solid #a2a2a2;
    border-bottom: 0;
}
.select{
    position: relative;
    height: 16px;
    flex: 1;
}
.select select{
    appearance: none;
    display: block;
    width: 100%;
    height: 100%;
    padding: 0 14px 0 3px;
    border: 1px solid #555;
    border-radius: 3px;
    background: #f0efe6;
    color: #3c3c3c;
}
.select::after{
    content: "";
    position: absolute;
    right: 2px;
    top: 3px;
    border: 5px solid transparent;
    border-top: 10px solid #929292;
    border-bottom: 0;
}
.select::before{
    content: "";
    position: absolute;
    right: 13px;
    top: 1px;
    bottom: 1px;
    border-left: 1px solid #bbb;
}
.tabs{
    display: flex;
    gap: 1px;
}
.tabs::after{
    content: "";
    flex: 1;
    border-bottom: 1px solid #e8e8e8;
}
.tab{
    gap: 5px;
    border: 1px solid #444;
    border-top-width: 2px;
    border-bottom: 0;
    border-radius: 4px 4px 0 0;
    background: linear-gradient(#878787, #747474);
}
.h{
    display: inline-block;
    width: 10px;
    height: 10px;
    border-radius: 2px;
    background: #dc143c;
    color: #fff;
    line-height: 10px;
    text-align: center;
}

/* top bar */
.topbar{
    display: flex;
    height: 50px;
    flex: none;
    background: linear-gradient(#6a6a6a, #363636);
}
.modes{
    width: 280px;
    padding: 3px 0 0 11px;
}
.mode-icons{
    display: flex;
    gap: 5px;
}
.mode{
    width: 26px;
    height: 26px;
    border: 1px solid #777;
    border-radius: 3px;
    background: #5c5c5c;
}
.mode svg{
    width: 24px;
    height: 24px;
}
.mode.active{
    border: 2px solid #5a66ad;
}
.mode.active svg{
    width: 22px;
    height: 22px;
}
.mode-name{
    width: 178px;
    padding-top: 5px;
    text-align: center;
}
.tools{
    display: flex;
    width: 215px;
    margin-right: 8px;
    border-right: 1px solid #8f8f91;
    background: linear-gradient(#6c6c6c, #4a4a4a);
}
.tools button{
    flex: 1;
    flex-direction: column;
    justify-content: flex-start;
    gap: 2px;
    padding-top: 2px;
    border-left: 1px solid #8f8f91;
    white-space: nowrap;
    line-height: 11px;
}
.tools svg{
    width: 22px;
    height: 22px;
}
.tools span{
    display: grid;
    place-content: center;
    height: 22px;
}
.sorting{
    display: grid;
    grid-template-columns: 19px 90px;
    grid-auto-rows: 16px;
    gap: 4px;
    align-items: center;
    flex: none;
    width: 119px;
    margin-left: 84px;
    padding-top: 7px;
}
.big{
    flex: none;
    flex-direction: column;
    gap: 2px;
    width: 36px;
    height: 37px;
    margin: 7px 4px 0 0;
}
.drop::after{
    content: "";
    display: inline-block;
    margin-left: 3px;
    border: 4px solid transparent;
    border-top-color: #fff;
    border-bottom: 0;
}

.work{
    flex: 1;
    display: grid;
    grid-template-columns: 1fr 227px;
    min-height: 0;
}
.main{
    display: flex;
    flex-direction: column;
    min-width: 0;
    min-height: 0;
}
.tabrow{
    display: flex;
    height: 27px;
    padding: 4px 0 0 3px;
}
.transport{
    width: 152px;
    margin-right: 8px;
    height: 22px;
}
.tabrow .tabs{
    flex: 1;
    border-bottom: 2px solid #aaa6aa;
    box-shadow: 0 1px #505050;
}
.tabrow .tabs::after{
    border: 0;
}
.live{
    width: 71px;
    justify-content: flex-start;
    padding-left: 8px;
}
.list{
    width: 81px;
}
.tabx{
    width: 12px;
    height: 12px;
}
.viewbar{
    display: flex;
    align-items: center;
    height: 25px;
    padding: 1px 4px 0;
    border-bottom: 1px solid #555;
}
.views{
    width: 59px;
    height: 20px;
}
.find{
    margin: 0 11px 0 2px;
}
.overview{
    display: flex;
    align-items: center;
    position: relative;
    flex: 1;
    height: 16px;
    border: 1px solid #111;
    background: #78b4ec;
    color: #24459c;
}
.overview i{
    width: 11px;
    height: 10px;
    border: 1px solid #235a9c;
    border-left: 3px solid #74489a;
}
.overview span{
    flex: 1;
    padding-left: 5px;
    text-align: center;
}
.addremove{
    width: 48px;
    height: 20px;
    margin-left: 10px;
}
.seg .remove{
    flex: none;
    width: 19px;
}
.addremove svg{
    width: 14px;
    height: 14px;
}
.cues{
    height: 57px;
    border-bottom: 1px solid #555;
}
.cue{
    display: flex;
    width: 70px;
    height: 56px;
    border-bottom: 2px solid #00e000;
}
.cue-halt{
    width: 14px;
    border: 1px solid #7c1838;
    background: #dc143c;
    writing-mode: vertical-rl;
    transform: rotate(180deg);
    text-align: center;
}
.cue-info{
    flex: 1;
    padding: 1px 0 0 4px;
    border-right: 3px solid #5b77ab;
    background: #a3a1a2;
    color: #fff;
    line-height: 13px;
}
.cue-info .h{
    margin-right: 6px;
}
.editbar{
    display: flex;
    align-items: center;
    height: 25px;
    padding-left: 5px;
}
.editbar input{
    width: 110px;
    height: 20px;
    padding: 0 4px;
    border: 2px solid #505050;
    border-radius: 4px;
    background: #f0efe6;
    color: #333;
    font-size: 11px;
}
.editbar label{
    margin: 0 4px 0 13px;
}
.editbar .btn{
    height: 18px;
    margin-left: 3px;
    gap: 4px;
}
.editbar .link{
    width: 41px;
    margin-right: -1px;
}
.link svg{
    width: 8px;
    height: 12px;
}
.sync{
    width: 29px;
}

/* timeline */
.timeline{
    flex: 1;
    display: grid;
    grid-template-columns: 148px 34px 1fr 35px 13px;
    grid-template-rows: 24px 27px 1fr;
    min-height: 0;
    border-top: 6px solid #444;
}
.cell{
    display: flex;
    align-items: center;
    gap: 4px;
    padding: 0 4px;
    border-top: 1px solid #8a8a8a;
    border-right: 1px solid #505050;
}
.cell .select{
    height: 17px;
}
.filter .select{
    margin-left: 7px;
}
.timing{
    padding: 0 4px 2px 2px;
    border-bottom: 1px solid #505050;
}
.ruler, .ruler-pad, .ruler-end{
    border-top: 1px solid #8a8a8a;
    border-bottom: 1px solid #444;
    background: #545454;
    color: #a2a2a2;
}
.ruler{
    display: grid;
    grid-template-columns: repeat(10, 1fr);
    position: relative;
    padding-left: 1px;
}
.ruler::before{
    content: "";
    position: absolute;
    left: -6px;
    top: 1px;
    border: 7px solid transparent;
    border-top: 7px solid #fff;
    border-bottom: 0;
}
.ruler::after{
    content: "";
    position: absolute;
    left: 0;
    top: 8px;
    bottom: 0;
    border-left: 2px solid #0000f0;
}
.ruler span, .ruler-end{
    padding: 13px 0 0 1px;
    border-left: 1px solid #808080;
    line-height: 10px;
}
.ruler span:nth-child(even){
    height: 11px;
    padding: 0;
}
.ruler-end{
    grid-column: span 2;
}
.halt{
    display: flex;
    flex-direction: column;
    align-items: center;
    height: 25px;
    padding-top: 2px;
    background: #383838;
}
.updown, .updown-end{
    border-bottom: 1px solid #555;
}
.updown{
    padding: 0 0 0 8px;
    background: linear-gradient(90deg, #8a8a8a 1px, transparent 1px) 1px 0 / 10% 100%;
    line-height: 13px;
}
.updown-end{
    grid-column: span 2;
}
.names{
    display: grid;
    grid-template-columns: 12px 13px 1fr;
    gap: 1px;
    height: 100%;
    min-height: 0;
    padding-left: 1px;
    border-right: 1px solid #444;
    overflow: hidden;
    background: #6495ed;
    color: #0c1838;
}
.part, .feature{
    display: flex;
    align-items: center;
    gap: 2px;
    padding-top: 1px;
    writing-mode: vertical-rl;
}
.part svg, .feature svg{
    width: 10px;
    height: 10px;
}
.part{
    border-right: 1px solid #444;
    background: #cd5c5c;
    color: #200;
}
.rows{
    display: grid;
    grid-template-rows: repeat(16, 1fr);
    height: 218px;
}
.names .rows div{
    padding-left: 4px;
    border: 1px solid #24458a;
    border-width: 0 0 1px 1px;
    border-radius: 5px 0 0 5px;
    color: #111;
}
.dark{
    background: #383838;
}
.lanes{
    position: relative;
    height: 100%;
    min-height: 0;
    overflow: hidden;
    border-left: 2px solid #0000f0;
    background: linear-gradient(90deg, #878787 2px, transparent 2px) -1px 0 / 10% 100%;
}
.bar{
    display: flex;
    min-width: 0;
    min-height: 0;
    color: #d6e2f8;
}
.bar svg{
    width: 7px;
    height: 100%;
    fill: rgba(108, 122, 152, .5);
    stroke: #2d4b85;
}
.bar span{
    flex: 1;
    padding-left: 3px;
    border: 1px solid #2d4b85;
    border-width: 1px 0;
    background: repeating-linear-gradient(135deg, transparent 0 4px, rgba(80, 105, 160, .35) 4px 5px), rgba(108, 122, 152, .5);
    background-clip: padding-box;
}
.bar.late{
    border-left: 1px solid #2d4b85;
}
.bar.plain span{
    background: rgba(108, 122, 152, .5);
    background-clip: padding-box;
}
.watermark{
    position: absolute;
    inset: 0;
    display: grid;
    place-items: center;
    color: rgba(255, 255, 255, .1);
    font-size: 84px;
    line-height: 84px;
}
.after{
    display: flex;
    align-items: center;
    background: #4d4d4d;
}
.grip{
    width: 16px;
    height: 60px;
    border: 1px solid #eee;
    border-left: 0;
    border-radius: 0 3px 3px 0;
    background: linear-gradient(90deg, #bcbcbc 5px, #ddd 5px, #ddd 9px, #bcbcbc 9px);
}
.vscroll{
    display: flex;
    flex-direction: column;
    width: 13px;
    background: #333;
}
.vscroll i{
    flex: none;
    display: grid;
    place-items: center;
    height: 13px;
    border: 1px solid #5a5a5a;
    background: #717171;
}
.vscroll i::after, .hscroll i::after{
    content: "";
    border: 5px solid transparent;
}
.vscroll .up::after{
    border-bottom: 10px solid #a2a2a2;
    border-top: 0;
}
.vscroll .down::after{
    border-top: 10px solid #a2a2a2;
    border-bottom: 0;
}
.vscroll .thumb{
    height: 55%;
    margin: 0 1px;
    background: linear-gradient(90deg, #888, #f6f6f6 50%, #888);
}
.vscroll .down{
    margin-top: auto;
}
.vscroll.low .thumb{
    margin-top: auto;
}
.vscroll.low .down{
    margin-top: 0;
}
.vscroll.tall .thumb{
    height: 64%;
}
.box .vscroll .thumb{
    height: 22px;
}
.footbar{
    display: flex;
    height: 23px;
    border-top: 1px solid #505050;
}
.selects, .zooms{
    display: flex;
    align-items: center;
    gap: 3px;
}
.selects{
    width: 148px;
    border-right: 1px solid #505050;
}
.zooms{
    gap: 5px;
    padding-left: 6px;
}
.icon{
    width: 20px;
    height: 20px;
}
.hscroll{
    display: flex;
    flex: 1;
    height: 14px;
    margin: 4px 20px 0 3px;
    border: 1px solid #555;
}
.hscroll .thumb{
    flex: 1;
    background: linear-gradient(#777, #f6f6f6 50%, #777);
}
.hscroll i{
    display: grid;
    place-items: center;
    width: 13px;
}
.hscroll .left::after{
    border-right: 10px solid #a2a2a2;
    border-left: 0;
}
.hscroll .right::after{
    border-left: 10px solid #a2a2a2;
    border-right: 0;
}

/* quick pickers */
.pickers{
    display: flex;
    gap: 5px;
    height: 108px;
    border-top: 5px solid #444;
    border-bottom: 1px solid #444;
    background: #444;
}
.multi{
    flex: 718;
}
.single{
    flex: 150;
}
.pickers section{
    display: flex;
    flex-direction: column;
    min-width: 0;
}
h2{
    display: flex;
    align-items: center;
    justify-content: space-between;
    height: 13px;
    margin: 0;
    padding: 0 1px 0 4px;
    background: #555;
    font-size: 9px;
    font-weight: normal;
}
h2 span{
    display: flex;
    gap: 1px;
}
h2 button{
    width: 12px;
    height: 9px;
    background: #aaa;
}
h2 svg{
    width: 10px;
    height: 10px;
}
.panels{
    flex: 1;
    display: flex;
    gap: 5px;
    min-height: 0;
}
.panel{
    flex: 1;
    display: flex;
    flex-direction: column;
    gap: 2px;
    min-width: 0;
    padding: 2px 2px 0;
    background: #717171;
}
.choose{
    display: flex;
    gap: 3px;
}
.choose .select{
    height: 18px;
}
.choose .select.short{
    flex: none;
    width: 52px;
}
.wrench{
    width: 17px;
    height: 18px;
}
.box{
    flex: 1;
    display: flex;
    min-height: 0;
    border: 1px solid #555;
    overflow: hidden;
}
ul{
    flex: 1;
    margin: 0;
    padding: 0 0 0 3px;
    list-style: none;
}
li{
    display: flex;
    align-items: center;
    gap: 6px;
    height: 17px;
    line-height: 10px;
}
li:nth-child(4){
    height: 14px;
    overflow: hidden;
}
li:nth-child(4) svg{
    align-self: flex-start;
}
.off{
    color: #9d9d9d;
}
.colours{
    color: #9d9d9d;
}
.colours li{
    height: 26px;
}
.colours i{
    width: 24px;
    height: 24px;
    border: 1px solid #606060;
    border-radius: 50%;
}
.cyan{
    background: #559090;
}
.indigo{
    background: #56619a;
}
.command{
    display: flex;
    align-items: center;
    height: 30px;
    padding: 0 4px;
}
.command svg{
    width: 28px;
    height: 22px;
}
.command label{
    width: 76px;
    padding-left: 3px;
}
.command input{
    flex: 1;
    height: 21px;
    border: 1px solid #555;
    border-radius: 3px;
    background: #000;
}

/* side panel */
.side{
    display: flex;
    flex-direction: column;
    min-height: 0;
    margin-top: 3px;
    padding: 3px 2px 0 2px;
    border-left: 5px solid #444;
    border-right: 1px solid #444;
}
.side-tabs{
    height: 19px;
    flex: none;
}
.side-tabs .tab{
    width: 66px;
}
.side-tabs .tab + .tab{
    width: 80px;
}
.side-tabs svg{
    width: 14px;
    height: 14px;
}
.side section{
    padding: 4px 0 0;
    border-bottom: 1px solid #111;
    box-shadow: 0 1px #808080;
}
.kinds{
    height: 18px;
    margin: 1px 9px 7px 8px;
}
.kinds .custom{
    flex: none;
    width: 37px;
}
.line{
    display: flex;
    align-items: center;
    gap: 10px;
    height: 20px;
}
.kind{
    width: 28px;
    height: 20px;
}
.levels{
    width: 154px;
    height: 17px;
    color: #484848;
}
.slider{
    display: flex;
    align-items: center;
    height: 19px;
    margin: 6px 0 5px 1px;
    border-radius: 3px;
    color: #858585;
}
.slider svg{
    width: 19px;
    height: 19px;
    border: 1px solid #696969;
}
.track{
    flex: 1;
    height: 17px;
    padding-left: 8px;
    border: 1px solid #696969;
    color: #4e4e4e;
    font: italic bold 12px/15px "Liberation Sans", Arial, sans-serif;
    white-space: nowrap;
}
.slider span{
    width: 29px;
    height: 18px;
    margin-left: 4px;
    border: 1px solid #676767;
    border-radius: 3px;
    color: #646464;
    line-height: 16px;
    text-align: center;
}
.blue .track{
    background: linear-gradient(#6d7176, #6c7582);
}
.sat .track{
    background: linear-gradient(90deg, #585858, #87866c);
}
.half .track{
    background: linear-gradient(90deg, #69717e 50%, transparent 50%);
}
.green .track{
    background: linear-gradient(90deg, #6a7e62 51%, transparent 51%);
}
.side .position{
    display: flex;
    gap: 7px;
    height: 96px;
}
.pos-btns{
    width: 28px;
}
.pos-btns .btn{
    width: 28px;
    height: 17px;
    margin-bottom: 6px;
}
.pos-btns .kind{
    height: 20px;
}
.pan{
    flex: 1;
    width: auto;
    height: 90px;
    min-width: 0;
}
.mixers{
    width: 96px;
    height: 18px;
}
.field{
    height: 86px;
    margin-top: 5px;
    background: linear-gradient(transparent, #8a8a8a), linear-gradient(90deg, #8f5f5f, #8f8f5d 17%, #5a8f5a 34%, #5e8f8f 51%, #5c5c90 67%, #905c90 84%, #905c5c);
}
.side .sat{
    margin-bottom: 3px;
}
.gobo-tabs{
    width: 107px;
    height: 18px;
}
.gobo-tabs .tab{
    width: 54px;
}
.gobo-box{
    height: 55px;
    margin: 3px 0 5px;
    border: 1px solid #555;
}
.spin{
    gap: 2px;
    height: 18px;
    padding-left: 2px;
}
.spin .seg{
    width: 54px;
    height: 17px;
    margin-right: 3px;
}
.seg.off{
    color: #555;
}
.spin .btn{
    width: 24px;
    height: 18px;
}
.side .half{
    margin-bottom: 7px;
}
.focus{
    width: 67px;
    height: 17px;
}
.side .beam{
    border: 0;
    box-shadow: none;
}
```
FILE: timeline.js
```javascript
var fixtures = [
    "101:Mac250Es", "102:Mac250Es", "103:Mac250Es", "104:Mac250Es", "105:Mac250Es", "106:Mac250Es",
    "150:VL3000Sp", "151:VL3000Sp", "152:VL3000Sp", "153:VL3000Sp", "154:VL3000Sp", "155:VL3000Sp",
    "156:VL3000Sp", "157:VL3000Sp", "158:VL3000Sp", "159:VL3000Sp"
];
var fanned = 12;      // fixtures with a fanned delay
var step = 3.66;      // delay between fixtures, % of a second
var fade = 26.3;

function drawRows() {
    var nameList = document.getElementById("names");
    var laneList = document.getElementById("lanes");

    for (var i = 0; i < fixtures.length; i++) {
        var row = document.createElement("div");
        row.textContent = fixtures[i];
        nameList.appendChild(row);

        var late = i > 0 && i < fanned;
        var bar = document.createElement("div");
        bar.className = "bar" + (late ? " late" : "") + (i >= fanned ? " plain" : "");
        bar.style.marginLeft = (late ? i * step - 0.2 : 0) + "%";
        bar.style.width = fade + "%";
        bar.innerHTML =
            '<svg viewBox="0 0 7 14" preserveAspectRatio="none"><path d="M7 .5L1 7l6 6.500"/></svg>' +
            '<span>Full | 0s</span>' +
            '<svg viewBox="0 0 7 14" preserveAspectRatio="none"><path d="M0 .5h6.500L1 7l5.500 6.500H0"/></svg>';
        laneList.appendChild(bar);
    }
}

drawRows();
```
